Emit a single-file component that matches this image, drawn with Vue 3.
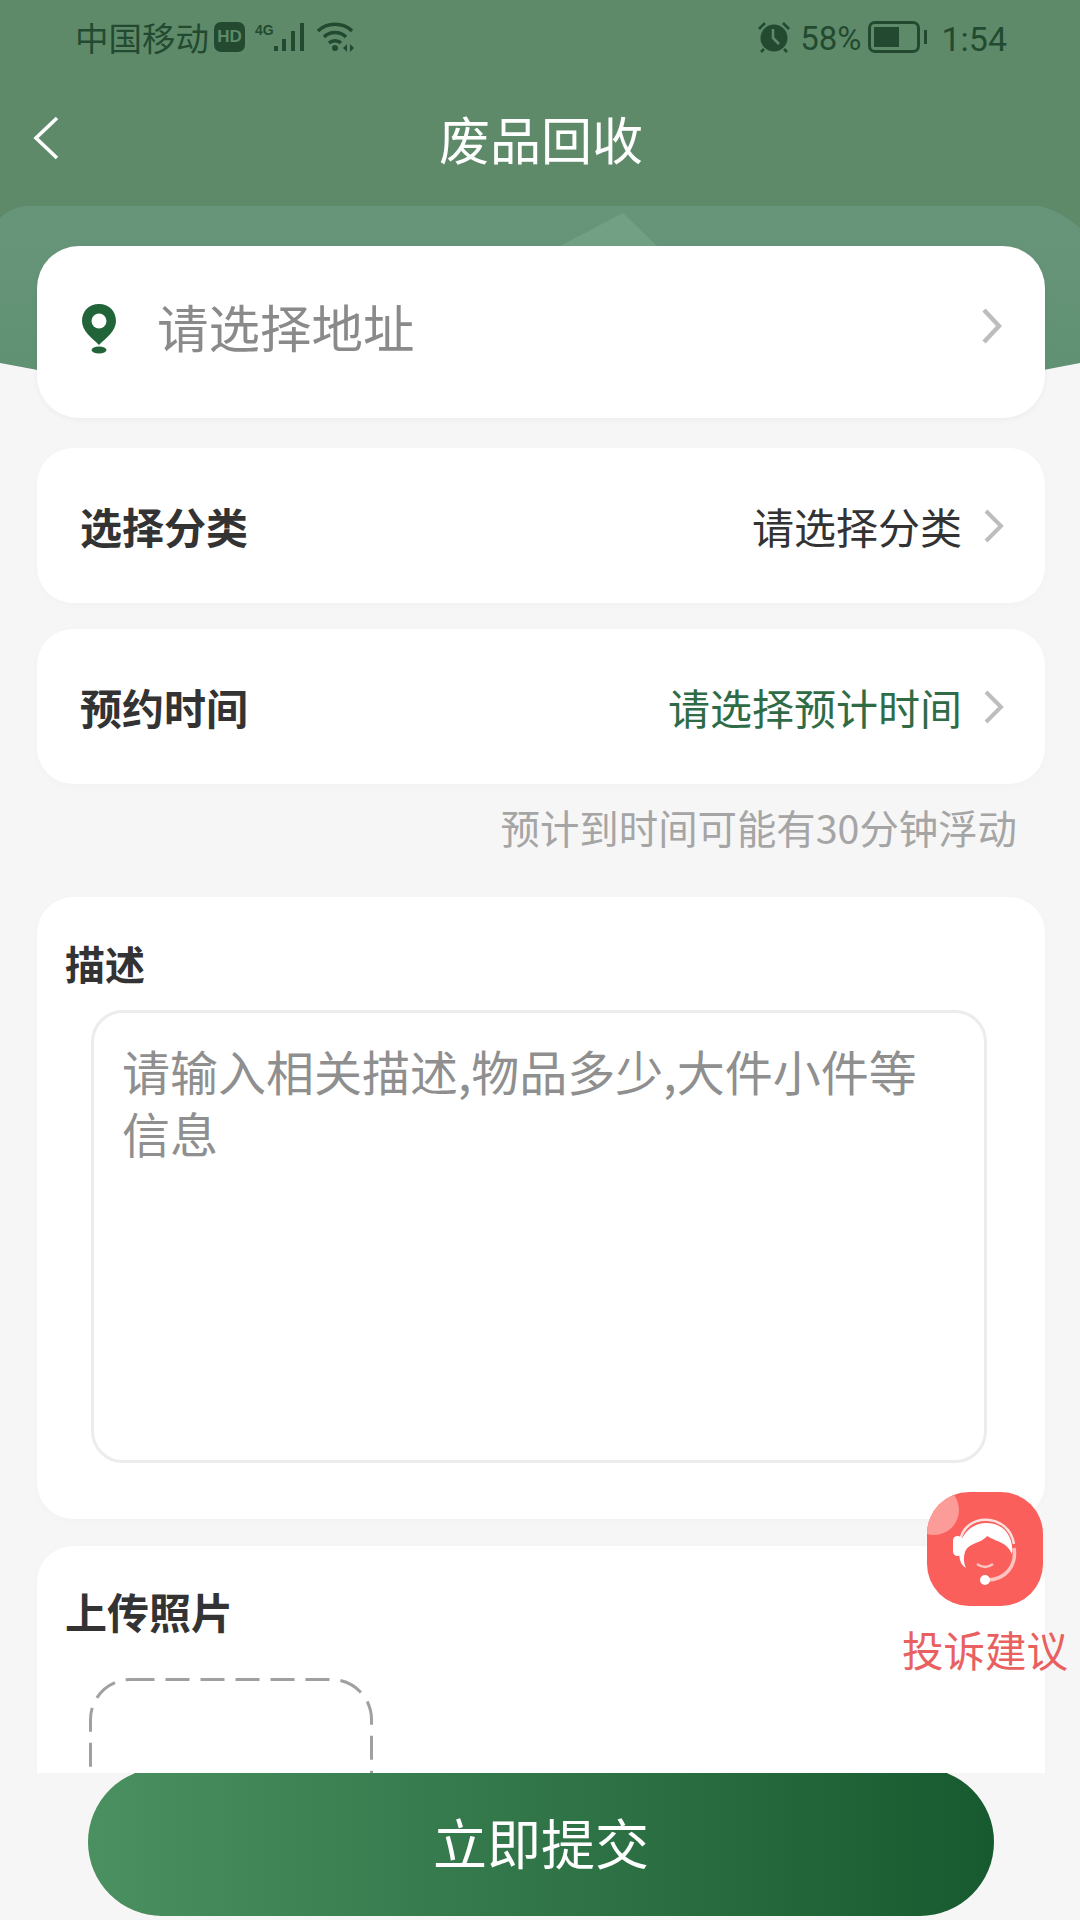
<script setup>
const rows = [
  { label: '选择分类', value: '请选择分类', green: false },
  { label: '预约时间', value: '请选择预计时间', green: true }
]
</script>

<template>
  <div class="page">
    <svg class="header-bg" width="1080" height="440" viewBox="0 0 1080 440">
      <defs>
        <linearGradient id="bandFill" x1="0" y1="0" x2="0" y2="1">
          <stop offset="0" stop-color="#67957a" />
          <stop offset="1" stop-color="#5f9071" />
        </linearGradient>
      </defs>
      <rect width="1080" height="232" fill="#5e8a6a" />
      <path d="M0 218 Q10 208 26 206 H1040 Q1062 212 1080 228 V363 Q540 470 0 363 Z" fill="url(#bandFill)" />
      <path d="M560 246 L623 213 L657 246 Z" fill="#72a084" />
    </svg>

    <div class="main">
      <div class="status">
        <div class="status-left">
          <span class="carrier">中国移动</span>
          <span class="hd">HD</span>
          <span class="net">
            <span class="four-g">4G</span>
            <svg width="32" height="30" viewBox="0 0 32 30" fill="#234a30">
              <rect x="0" y="24" width="4" height="5" />
              <rect x="8" y="17" width="4" height="12" />
              <rect x="17" y="9" width="4" height="20" />
              <rect x="26" y="1" width="4" height="28" />
            </svg>
          </span>
          <svg class="wifi" width="38" height="30" viewBox="0 0 38 30" fill="none" stroke="#234a30" stroke-width="3.4">
            <path d="M1 9 C10 0 26 0 35 9" />
            <path d="M7 15 C13 9 23 9 29 15" />
            <path d="M12 21 C15 18 21 18 24 21" />
            <circle cx="18" cy="26" r="3" fill="#234a30" stroke="none" />
            <path d="M30 22 L26 26 L30 30 Z M33 22 L37 26 L33 30 Z" fill="#234a30" stroke="none" />
          </svg>
        </div>
        <div class="status-right">
          <svg width="34" height="32" viewBox="0 0 34 32">
            <circle cx="17" cy="17" r="13.5" fill="#234a30" />
            <path d="M2 8 L8 2 M32 8 L26 2 M7 28 L4 31 M27 28 L30 31" stroke="#234a30" stroke-width="2.6" />
            <path d="M16 8 V17 L22 23" fill="none" stroke="#5e8a6a" stroke-width="2.6" />
          </svg>
          <span class="pct">58%</span>
          <span class="battery"><span class="battery-fill"></span></span>
          <span class="time">1:54</span>
        </div>
      </div>

      <div class="nav">
        <svg class="back" width="26" height="44" viewBox="0 0 26 44" fill="none" stroke="#fff" stroke-width="3.6">
          <path d="M24 2 L3 22 L24 42" />
        </svg>
        <div class="title">废品回收</div>
        <div></div>
      </div>

      <div class="card address">
        <svg class="pin" width="34" height="50" viewBox="0 0 34 50">
          <path d="M17 0 C7 0 0 7 0 17 C0 27 10 34 17 41 C24 34 34 27 34 17 C34 7 27 0 17 0 Z" fill="#226439" />
          <circle cx="17" cy="17" r="7.5" fill="#fff" />
          <ellipse cx="17" cy="46" rx="7.5" ry="3.5" fill="#226439" />
        </svg>
        <span class="address-text">请选择地址</span>
        <svg class="chev" width="20" height="36" viewBox="0 0 20 36" fill="none" stroke="#bdbdbd" stroke-width="4.5">
          <path d="M2 2 L17 18 L2 34" />
        </svg>
      </div>

      <div v-for="row in rows" :key="row.label" class="card row">
        <span class="row-label">{{ row.label }}</span>
        <span class="row-value" :class="{ green: row.green }">{{ row.value }}</span>
        <svg width="20" height="34" viewBox="0 0 20 34" fill="none" stroke="#bdbdbd" stroke-width="4">
          <path d="M2 2 L17 17 L2 32" />
        </svg>
      </div>

      <div class="note">预计到时间可能有30分钟浮动</div>

      <div class="card desc">
        <div class="section-title">描述</div>
        <textarea class="input" placeholder="请输入相关描述,物品多少,大件小件等信息"></textarea>
      </div>

      <div class="card upload">
        <div class="section-title wide">上传照片</div>
        <svg class="upload-box" width="284" height="284" viewBox="0 0 284 284" fill="none">
          <rect x="1.5" y="1.5" width="281" height="281" rx="40" stroke="#a0a0a0" stroke-width="3" stroke-dasharray="24 11" />
        </svg>
      </div>
    </div>

    <div class="footer">
      <div class="submit">立即提交</div>
    </div>

    <div class="complain">
      <svg width="116" height="114" viewBox="0 0 116 114">
        <defs>
          <clipPath id="iconClip"><rect width="116" height="114" rx="42" /></clipPath>
        </defs>
        <g clip-path="url(#iconClip)">
          <rect width="116" height="114" fill="#fb5f5b" />
          <circle cx="7" cy="18" r="25" fill="#fb9c98" />
        </g>
        <path d="M33 50 C36 20 82 20 87 52" fill="none" stroke="#fde0de" stroke-width="2.5" />
        <path d="M33 68 C28 44 46 30 60 31 C76 31 87 44 85 62 C80 50 70 50 60 44 C54 52 42 50 38 60 C36 66 37 72 39 76 C36 74 34 72 33 68 Z" fill="#fff" />
        <rect x="26" y="44" width="9" height="20" rx="4.5" fill="#fff" />
        <path d="M87 56 C90 74 78 88 60 88" fill="none" stroke="#fdc4c1" stroke-width="3.5" />
        <circle cx="58" cy="88" r="5" fill="#fff" />
        <path d="M50 72 Q58 78 66 72" fill="none" stroke="#fdc4c1" stroke-width="2.5" />
      </svg>
      <div class="complain-text">投诉建议</div>
    </div>
  </div>
</template>

<style scoped>
.page {
  position: relative;
  width: 1080px;
  height: 1920px;
  overflow: hidden;
  display: flex;
  flex-direction: column;
  background: #f6f6f6;
  font-family: "Noto Sans CJK SC", "Liberation Sans", sans-serif;
}

.header-bg {
  position: absolute;
  top: 0;
  left: 0;
}

.main {
  position: relative;
  height: 1773px;
  flex: none;
  overflow: hidden;
}

.status {
  height: 74px;
  padding: 0 73px 0 75px;
  display: flex;
  justify-content: space-between;
  align-items: center;
  color: #234a30;
  font-size: 32px;
  line-height: 32px;
}

.status-left,
.status-right {
  display: flex;
  align-items: center;
}

.carrier {
  font-size: 33.5px;
}

.hd {
  width: 31px;
  height: 30px;
  margin-left: 5px;
  border-radius: 7px;
  background: #234a30;
  color: #5e8a6a;
  font: bold 17px/30px "Liberation Sans", sans-serif;
  text-align: center;
}

.net {
  display: flex;
  align-items: flex-end;
  height: 30px;
  margin-left: 10px;
}

.four-g {
  align-self: flex-start;
  font: bold 14px/16px "Liberation Sans", sans-serif;
  width: 19px;
}

.wifi {
  margin-left: 11px;
}

.pct,
.time {
  position: relative;
  top: 2px;
  font-family: Roboto, sans-serif;
  font-size: 33px;
}

.pct {
  margin-left: 9px;
}

.battery {
  position: relative;
  width: 52px;
  height: 32px;
  margin-left: 7px;
  box-sizing: border-box;
  border: 3px solid #234a30;
  border-radius: 7px;
  padding: 3px;
}

.battery::after {
  content: "";
  position: absolute;
  right: -10px;
  top: 6px;
  width: 3px;
  height: 14px;
  background: #234a30;
}

.battery-fill {
  display: block;
  width: 25px;
  height: 100%;
  background: #234a30;
}

.time {
  margin-left: 21px;
  font-size: 34px;
}

.nav {
  height: 128px;
  display: grid;
  grid-template-columns: 1fr auto 1fr;
  align-items: center;
}

.back {
  margin-left: 33px;
}

.title {
  color: #fff;
  font-size: 51px;
  margin-left: 2px;
}

.card {
  margin: 0 35px 0 37px;
  background: #fff;
  border-radius: 36px;
  box-shadow: 0 2px 8px rgba(0, 0, 0, 0.02);
}

.address {
  margin-top: 44px;
  height: 172px;
  padding: 0 43px 0 45px;
  display: flex;
  align-items: center;
  border-radius: 42px;
  box-shadow: 0 2px 6px rgba(0, 0, 0, 0.04);
}

.pin {
  margin-top: -6px;
}

.address-text {
  flex: 1;
  margin-left: 41px;
  margin-top: -14px;
  color: #8a8a8a;
  font-size: 51.5px;
}

.address .chev {
  margin-top: -12px;
}

.row {
  height: 155px;
  margin-top: 30px;
  padding: 0 41px 0 43px;
  display: flex;
  align-items: center;
}

.row + .row {
  margin-top: 26px;
}

.row-label {
  flex: 1;
  color: #333;
  font-size: 42px;
  font-weight: 700;
}

.row-value {
  margin-right: 22px;
  color: #333;
  font-size: 42px;
}

.row-value.green {
  color: #2f6b45;
}

.note {
  margin: 18px 63px 0 0;
  text-align: right;
  color: #a5a5a5;
  font-size: 39.4px;
  line-height: 50px;
}

.desc {
  margin-top: 45px;
  height: 622px;
  padding: 41px 0 0 28px;
  box-sizing: border-box;
}

.section-title {
  color: #333;
  font-size: 40px;
  font-weight: 700;
  line-height: 50px;
}

.section-title.wide {
  font-size: 42px;
}

.input {
  display: block;
  width: 896px;
  height: 453px;
  margin: 22px 0 0 26px;
  padding: 26px 30px 0 28px;
  box-sizing: border-box;
  border: 3px solid #ececec;
  border-radius: 32px;
  outline: none;
  resize: none;
  font-family: inherit;
  font-size: 48px;
  line-height: 62px;
  background: #fff;
  overflow: hidden;
}

.input::placeholder {
  color: #8f8f8f;
  opacity: 1;
}

.upload {
  margin-top: 27px;
  padding: 40px 0 0 28px;
  height: 400px;
  box-sizing: border-box;
}

.upload-box {
  display: block;
  margin: 42px 0 0 24px;
}

.footer {
  flex: 1;
  overflow: hidden;
  padding: 0 86px 0 88px;
}

.submit {
  height: 148px;
  margin-top: -5px;
  border-radius: 74px;
  background: linear-gradient(90deg, #4a9060, #175a2f);
  color: #fff;
  font-size: 54px;
  line-height: 148px;
  text-align: center;
}

.complain {
  position: absolute;
  left: 902px;
  top: 1492px;
  width: 166px;
  display: flex;
  flex-direction: column;
  align-items: center;
}

.complain-text {
  margin-top: 18px;
  color: #e96060;
  font-size: 41.5px;
  line-height: 50px;
  white-space: nowrap;
}
</style>
